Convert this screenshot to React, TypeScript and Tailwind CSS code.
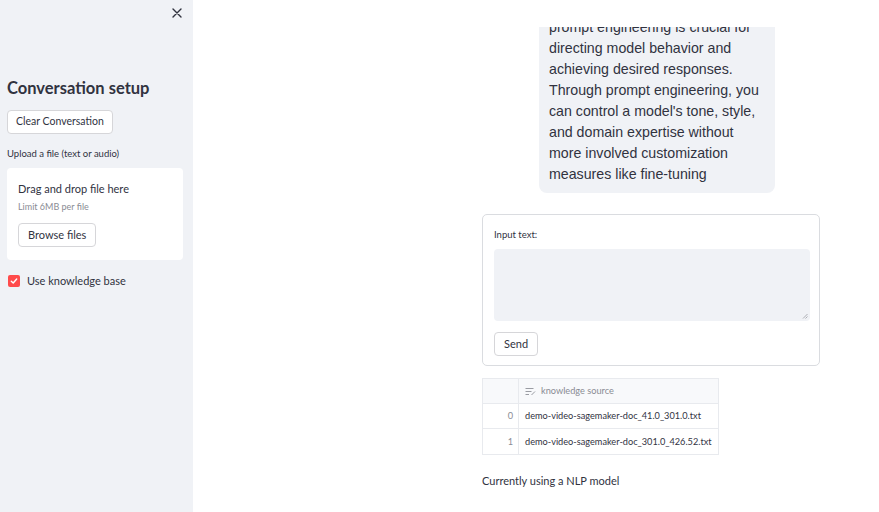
import React from "react";

const sans = { fontFamily: "Lato, 'Noto Sans', sans-serif" };

const bubbleLines = [
  "prompt engineering is crucial for",
  "directing model behavior and",
  "achieving desired responses.",
  "Through prompt engineering, you",
  "can control a model's tone, style,",
  "and domain expertise without",
  "more involved customization",
  "measures like fine-tuning",
];

const rows = [
  "demo-video-sagemaker-doc_41.0_301.0.txt",
  "demo-video-sagemaker-doc_301.0_426.52.txt",
];

const Sidebar: React.FC = () => (
  <div className="w-[193px] shrink-0 h-full bg-[#f0f2f6] flex flex-col pl-[7px] pr-[10px] text-[#31333f]">
    <div className="flex justify-end pt-[8px] pr-[1px]">
      <svg width="10" height="10" viewBox="0 0 10 10" className="text-[#31333f]">
        <path d="M1 1L9 9M9 1L1 9" stroke="currentColor" strokeWidth="1.4" strokeLinecap="round" />
      </svg>
    </div>
    <div className="mt-[59px] text-[16.5px] font-bold leading-[22px]">Conversation setup</div>
    <button className="mt-[11px] self-start h-[24px] px-[8px] bg-white border border-[#d6d6d9] rounded-[4px] text-[10.5px]">
      Clear Conversation
    </button>
    <div className="mt-[14px] text-[9.5px] leading-[12px]">Upload a file (text or audio)</div>
    <div className="mt-[8px] bg-white rounded-[4px] h-[92px] px-[11px] pt-[14px]">
      <div className="text-[11px] leading-[14px]">Drag and drop file here</div>
      <div className="mt-[5px] text-[9px] leading-[11px] text-[#8a8c94]">Limit 6MB per file</div>
      <button className="mt-[11px] h-[24px] px-[9px] bg-white border border-[#d6d6d9] rounded-[4px] text-[11px]">
        Browse files
      </button>
    </div>
    <div className="mt-[14px] flex items-center gap-[7px] pl-[1px]">
      <div className="w-[12px] h-[12px] rounded-[2px] bg-[#ff4b4b] flex items-center justify-center">
        <svg width="8" height="8" viewBox="0 0 8 8">
          <path d="M1.3 4.2L3.2 6L6.7 2" stroke="white" strokeWidth="1.4" fill="none" strokeLinecap="round" strokeLinejoin="round" />
        </svg>
      </div>
      <span className="text-[11px] leading-[14px]">Use knowledge base</span>
    </div>
  </div>
);

export default function App() {
  return (
    <div className="w-[879px] h-[512px] flex overflow-hidden bg-white" style={sans}>
      <Sidebar />
      <div className="relative flex-1 h-full overflow-hidden">
        {/* app header overlays the scrolled chat */}
        <div className="absolute top-0 left-0 right-0 h-[27px] bg-white z-10" />
        <div className="ml-[289px] w-[338px] flex flex-col text-[#31333f]">
          <div
            className="ml-[57px] w-[236px] mt-[6px] bg-[#f0f2f6] rounded-[8px] pl-[10px] pt-[10.5px] pb-[8.5px] text-[14.2px] leading-[21px] text-[#31333f]"
            style={{ fontFamily: "'Liberation Sans', Arial, sans-serif" }}
          >
            {bubbleLines.map((l) => (
              <div key={l} className="whitespace-nowrap">{l}</div>
            ))}
          </div>

          <div className="mt-[21px] h-[152px] border border-[#dadce0] rounded-[5px] pl-[11px] pr-[9px] pt-[14px]">
            <div className="text-[9.5px] leading-[12px]">Input text:</div>
            <div className="mt-[8px] relative h-[72px] bg-[#f0f2f6] rounded-[4px]">
              <svg width="6" height="6" viewBox="0 0 6 6" className="absolute right-[2px] bottom-[2px]">
                <path d="M5.5 1L1 5.5M5.5 3.5L3.5 5.5" stroke="#9a9ca3" strokeWidth="0.8" />
              </svg>
            </div>
            <button className="mt-[11px] h-[24px] px-[9px] bg-white border border-[#d6d6d9] rounded-[4px] text-[11px]">
              Send
            </button>
          </div>

          <div className="mt-[12px] w-[237px] border border-[#e8eaee] text-[9.2px]">
            <div className="flex h-[25px] bg-[#f8f9fb] border-b border-[#e8eaee]">
              <div className="w-[36px] border-r border-[#e8eaee]" />
              <div className="flex items-center gap-[5px] pl-[6px] text-[#8a8c94]">
                <svg width="11" height="9" viewBox="0 0 11 9" fill="none" stroke="#9a9ca3" strokeWidth="1">
                  <path d="M0.5 1.5H8.5M0.5 4.5H6.5M0.5 7.5H4" />
                  <path d="M6.5 8L10 4.5" />
                </svg>
                <span>knowledge source</span>
              </div>
            </div>
            {rows.map((r, i) => (
              <div key={r} className={`flex h-[25px] items-center ${i === 0 ? "border-b border-[#e8eaee]" : ""}`}>
                <div className="w-[36px] h-full border-r border-[#e8eaee] flex items-center justify-end pr-[5px] text-[#8a8c94]">
                  {i}
                </div>
                <div className="pl-[6px] text-[#31333f]">{r}</div>
              </div>
            ))}
          </div>

          <div className="mt-[19px] text-[11px] leading-[14px]">Currently using a NLP model</div>
        </div>
      </div>
    </div>
  );
}
